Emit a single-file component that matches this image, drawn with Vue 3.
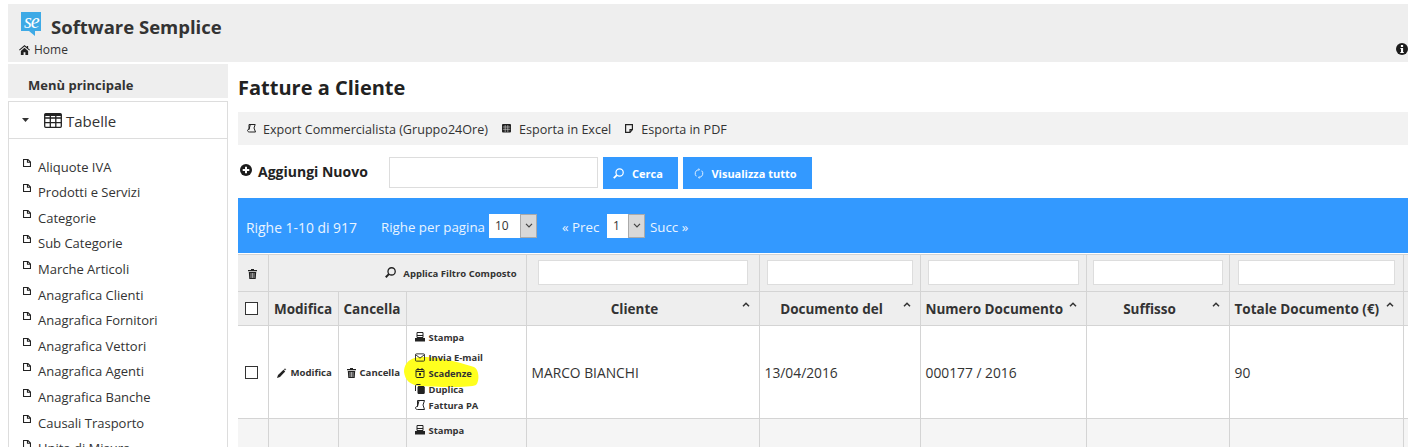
<script setup>
const menu = ['Aliquote IVA','Prodotti e Servizi','Categorie','Sub Categorie','Marche Articoli','Anagrafica Clienti','Anagrafica Fornitori','Anagrafica Vettori','Anagrafica Agenti','Anagrafica Banche','Causali Trasporto','Unita di Misura']
const widths = [30,70,68,120,233,161,166,143,174,120]
const sortCols = [
  { label: 'Cliente', cls: 'center' },
  { label: 'Documento del', cls: 'center' },
  { label: 'Numero Documento', cls: 'tight' },
  { label: 'Suffisso', cls: 'center' },
  { label: 'Totale Documento (€)', cls: 'tight' }
]
const filters = [
  { w: 210, pad: 11 },
  { w: 146, pad: 7 },
  { w: 151, pad: 7 },
  { w: 130, pad: 6 },
  { w: 157, pad: 8 }
]
const actions = [
  { label: 'Stampa', icon: 'print', cls: 'first' },
  { label: 'Invia E-mail', icon: 'mail' },
  { label: 'Scadenze', icon: 'cal' },
  { label: 'Duplica', icon: 'dup' },
  { label: 'Fattura PA', icon: 'scroll' }
]
</script>

<template>
  <div class="page">
    <header class="top">
      <div class="brand">
        <div class="logo"><span>se</span><i></i></div>
        <h1>Software Semplice</h1>
      </div>
      <div class="crumb">
        <div class="home">
          <svg width="11" height="10" viewBox="0 0 12 11"><path d="M6 0 0 5.2l.7.8L6 1.6 11.3 6l.7-.8-2-1.700V1H8.500v1.200zM2 6.500V11h3V8h2v3h3V6.500L6 3z" fill="#222"/></svg>
          <span>Home</span>
        </div>
        <svg class="info" width="12" height="12" viewBox="0 0 12 12"><circle cx="6" cy="6" r="6" fill="#1c1c1c"/><rect x="4.900" y="2" width="2.200" height="2" fill="#fff"/><path d="M4.400 5h2.700v4h.7v1H4.300V9H5V6h-.6z" fill="#fff"/></svg>
      </div>
    </header>

    <div class="body">
      <aside class="side">
        <div class="side-head">Menù principale</div>
        <div class="acc">
          <svg class="caret" width="7" height="4" viewBox="0 0 7 4"><path d="M0 0h7L3.500 4z" fill="#333"/></svg>
          <svg width="18" height="15" viewBox="0 0 18 15" fill="none" stroke="#222" stroke-width="1.300"><rect x=".7" y=".7" width="16.600" height="13.600" rx="1"/><path d="M.7 5h16.600M.7 9.700h16.600M6.300.7v13.600M11.800.7v13.600"/><path d="M.7 2h16.600" stroke-width="2"/></svg>
          <span>Tabelle</span>
        </div>
        <ul class="menu">
          <li v-for="m in menu" :key="m">
            <svg width="8" height="8" viewBox="0 0 9 9" fill="none" stroke="#222" stroke-width="1.200"><path d="M.6.600h5l2.800 2.800v5H.6zM5 .600v3h3.400"/></svg>
            <span>{{ m }}</span>
          </li>
        </ul>
      </aside>

      <main class="main">
        <h2>Fatture a Cliente</h2>
        <div class="tools">
          <span class="tool">
            <svg width="9" height="9" viewBox="0 0 9 9" fill="none" stroke="#222"><path d="M2 .5h6.200L7 4l1.500 4H2.500c-1.500 0-2-1-2-1.500 0-.7.400-1 1.500-1zM2 5.500 3.200 1"/></svg>
            <span>Export Commercialista (Gruppo24Ore)</span>
          </span>
          <span class="tool">
            <svg width="9" height="9" viewBox="0 0 9 9"><rect width="9" height="8.500" rx="1" fill="#222"/><path d="M.8 3h7.400M.8 5.300h7.400M3.200 1v7M5.800 1v7" stroke="#ddd" stroke-width=".6"/></svg>
            <span>Esporta in Excel</span>
          </span>
          <span class="tool">
            <svg width="8" height="9" viewBox="0 0 8 9" fill="none" stroke="#222" stroke-width="1.200"><path d="M.6.600h6.800v5L5 8.400H.6zM7.400 5.500H5v2.800"/></svg>
            <span>Esporta in PDF</span>
          </span>
        </div>
        <div class="search">
          <div class="add">
            <svg width="12" height="12" viewBox="0 0 12 12"><circle cx="6" cy="6" r="6" fill="#1c1c1c"/><path d="M6 2.700v6.600M2.700 6h6.600" stroke="#fff" stroke-width="2"/></svg>
            <span>Aggiungi Nuovo</span>
          </div>
          <input class="q" type="text" />
          <button class="btn cerca">
            <svg width="11" height="11" viewBox="0 0 10 10" fill="none" stroke="#fff" stroke-width="1.100"><circle cx="6" cy="4" r="3.300"/><path d="M3.500 6.500.7 9.300" stroke-width="1.600"/></svg>
            <span>Cerca</span>
          </button>
          <button class="btn vis">
            <svg width="10" height="11" viewBox="0 0 10 11" fill="none" stroke="#dfefff" stroke-width="1"><path d="M2.300 8.300A4 4 0 0 1 4.500 1.600M7.700 2.700a4 4 0 0 1-2.200 6.700"/><path d="M4.500 0v3.200L6 1.600zM5.500 11V7.800L4 9.400z" fill="#dfefff" stroke="none"/></svg>
            <span>Visualizza tutto</span>
          </button>
        </div>

        <div class="pager">
          <span class="t count">Righe 1-10 di 917</span>
          <span class="t rpp">Righe per pagina</span>
          <div class="sel s1"><span>10</span><b><svg width="8" height="5" viewBox="0 0 8 5" fill="none" stroke="#444" stroke-width="1.200"><path d="m1 .8 3 3 3-3"/></svg></b></div>
          <span class="t prev">« Prec</span>
          <div class="sel s2"><span>1</span><b><svg width="8" height="5" viewBox="0 0 8 5" fill="none" stroke="#444" stroke-width="1.200"><path d="m1 .8 3 3 3-3"/></svg></b></div>
          <span class="t">Succ »</span>
        </div>

        <table class="grid">
          <colgroup>
            <col v-for="(w, i) in widths" :key="i" :style="{ width: w + 'px' }" />
          </colgroup>
          <tbody>
            <tr class="r-filter">
              <td class="c">
                <svg width="9" height="10" viewBox="0 0 9 10"><path d="M3 0h3v1h3v1.200H0V1h3zM.8 3h7.400l-.5 7H1.300z" fill="#222"/><path d="M3 4v5M4.500 4v5M6 4v5" stroke="#eee" stroke-width=".6"/></svg>
              </td>
              <td colspan="3" class="apply">
                <svg width="11" height="11" viewBox="0 0 10 10" fill="none" stroke="#222" stroke-width="1.200"><circle cx="6" cy="4" r="3.300"/><path d="M3.500 6.500.7 9.300" stroke-width="1.800"/></svg>
                <span>Applica Filtro Composto</span>
              </td>
              <td v-for="f in filters" :key="f.pad + '-' + f.w" :style="{ paddingLeft: f.pad + 'px' }"><input class="f" type="text" :style="{ width: f.w + 'px' }" /></td>
              <td></td>
            </tr>
            <tr class="r-head">
              <td class="c"><span class="box"></span></td>
              <th>Modifica</th>
              <th>Cancella</th>
              <th></th>
              <th v-for="c in sortCols" :key="c.label" :class="c.cls">
                <div class="th">
                  <span>{{ c.label }}</span>
                  <svg width="8" height="5" viewBox="0 0 8 5" fill="none" stroke="#333" stroke-width="1.500"><path d="m1 4.300 3-3 3 3"/></svg>
                </div>
              </th>
              <th></th>
            </tr>
            <tr class="r-data">
              <td class="c"><span class="box"></span></td>
              <td class="act">
                <svg width="10" height="10" viewBox="0 0 10 10"><path d="M0 10 1 7 6.500 1.800l1.700 1.700L3 9z" fill="#222"/><path d="M8 0l.4 1 1 .4-1 .4L8 2.800l-.4-1-1-.4 1-.4z" fill="#222"/></svg>
                <span>Modifica</span>
              </td>
              <td class="act">
                <svg width="9" height="10" viewBox="0 0 9 10"><path d="M3 0h3v1h3v1.200H0V1h3zM.8 3h7.400l-.5 7H1.300z" fill="#222"/><path d="M3 4v5M4.500 4v5M6 4v5" stroke="#fff" stroke-width=".6"/></svg>
                <span>Cancella</span>
              </td>
              <td class="acts">
                <svg class="mark" width="76" height="32" viewBox="0 0 76 32"><path d="M8 3C14 0 24 1 32 2 44 3 60 8 70 11c5 2 6 14 2 18-6 3-42 2-56 1C6 29 1 24 0 16 0 10 3 5 8 3z" fill="#ffff1e"/></svg>
                <div v-for="a in actions" :key="a.label" class="a-row" :class="a.cls">
                  <svg v-if="a.icon === 'print'" width="10" height="10" viewBox="0 0 10 10" fill="none" stroke="#222"><path d="M2 .5h6v5H2z"/><path d="M0 6h10v3.500H0z" fill="#222" stroke="none"/><path d="M2 3.500h6" /></svg>
                  <svg v-else-if="a.icon === 'mail'" width="11" height="9" viewBox="0 0 11 9" fill="none" stroke="#222"><rect x=".5" y=".5" width="10" height="8" rx="1"/><path d="m.8 1.500 4.700 3.700 4.700-3.700"/></svg>
                  <svg v-else-if="a.icon === 'cal'" width="9" height="10" viewBox="0 0 9 10" fill="none" stroke="#222"><rect x=".5" y="1.500" width="8" height="8" rx="1"/><path d="M2.500 0v2.500M6.500 0v2.500M.5 3.500h8" /><rect x="3.500" y="5" width="2" height="2.500" fill="#222" stroke="none"/></svg>
                  <svg v-else-if="a.icon === 'dup'" width="10" height="10" viewBox="0 0 10 10"><path d="M.5 7V2C.5 1 1.200.5 2 .5h3.500" fill="none" stroke="#222"/><path d="M2.500 3.500c0-.8.500-1.500 1.500-1.500h4c1 0 1.800.7 1.800 1.500V8.500c0 1-.8 1.500-1.800 1.500H4c-1 0-1.500-.5-1.500-1.500z" fill="#222"/></svg>
                  <svg v-else width="10" height="10" viewBox="0 0 10 10" fill="none" stroke="#222"><path d="M2.500.5h7L8 5l1.500 4.500H2.500C1 9.500.5 8.500.5 8c0-.8.500-1.500 2-1.500zM2.500 6.500 4 .8"/></svg>
                  <span>{{ a.label }}</span>
                </div>
              </td>
              <td>MARCO BIANCHI</td>
              <td>13/04/2016</td>
              <td>000177 / 2016</td>
              <td></td>
              <td>90</td>
              <td></td>
            </tr>
            <tr class="r-alt">
              <td></td><td></td><td></td>
              <td class="acts">
                <div class="a-row first">
                  <svg width="10" height="10" viewBox="0 0 10 10" fill="none" stroke="#222"><path d="M2 .5h6v5H2z"/><path d="M0 6h10v3.500H0z" fill="#222" stroke="none"/><path d="M2 3.500h6" /></svg>
                  <span>Stampa</span>
                </div>
              </td>
              <td></td><td></td><td></td><td></td><td></td><td></td>
            </tr>
          </tbody>
        </table>
      </main>
    </div>
  </div>
</template>

<style>
html, body { margin: 0; background: #fff; overflow: hidden; }
</style>

<style scoped>
.page {
  width: 1408px; height: 447px; overflow: hidden; padding-top: 4px; box-sizing: border-box;
  font-family: "Open Sans", "Noto Sans", sans-serif; color: #333; font-size: 13px;
}
.top { margin-left: 8px; height: 58px; background: #eee; box-sizing: border-box; padding: 8px 0 0 13px; }
.brand { display: flex; align-items: flex-start; height: 27px; }
.logo { position: relative; width: 20px; height: 19px; background: #3eaae6; margin-right: 10px; flex: none; }
.logo span { display: block; color: #fff; font: italic 400 20px/19px "Liberation Serif", serif; letter-spacing: -1px; padding-left: 3px; }
.logo i { position: absolute; left: 8px; top: 19px; width: 0; height: 0; border-top: 5px solid #3eaae6; border-left: 6px solid transparent; }
h1 { margin: 1px 0 0; font-size: 18.500px; font-weight: 700; color: #333; line-height: 27px; }
.crumb { display: flex; justify-content: space-between; align-items: center; margin-top: 2px; height: 17px; margin-left: -2px; }
.home { display: flex; align-items: center; gap: 4px; font-size: 12px; color: #333; }
.info { margin-top: -2px; }
.body { display: flex; }
.side { width: 220px; margin: 2px 0 0 8px; flex: none; }
.side-head { height: 34px; background: #eee; font-weight: 700; font-size: 13px; line-height: 43px; padding-left: 20px; box-sizing: border-box; overflow: hidden; color: #333; }
.acc { margin-top: 3px; height: 38px; box-sizing: border-box; border: 1px solid #ddd; display: flex; align-items: center; padding-left: 13px; font-size: 15px; color: #333; }
.caret { margin-right: 15px; }
.acc span { margin-left: 4px; padding-top: 2px; }
.menu { list-style: none; margin: 0; padding: 15.700px 0 0 14px; border: 1px solid #ddd; border-width: 0 1px; height: 320px; box-sizing: border-box; }
.menu li { height: 25.600px; display: flex; align-items: flex-start; color: #333; font-size: 13px; line-height: 25px; }
.menu svg { margin: 4px 7px 0 0; flex: none; }
.main { margin-left: 10px; width: 1400px; flex: none; }
h2 { margin: 0; height: 50px; font-size: 20px; line-height: 52px; font-weight: 700; color: #222; }
.tools { width: 1170px; height: 33px; background: #f2f2f2; display: flex; align-items: center; padding-left: 9px; gap: 14px; font-size: 12.600px; color: #333; }
.tool { display: flex; align-items: center; gap: 7px; }
.tool span { padding-top: 1px; }
.tool + .tool { gap: 8px; }
.search { display: flex; align-items: flex-start; margin-top: 12px; height: 41px; }
.add { display: flex; align-items: center; gap: 6px; font-weight: 700; font-size: 14px; color: #222; padding-top: 5px; margin-left: 2px; flex: none; box-sizing: border-box; width: 149px; }
.add svg { margin-top: -3px; }
.q { width: 209px; height: 31px; box-sizing: border-box; border: 1px solid #ddd; background: #fff; margin: 0 5px 0 0; padding: 0; }
.btn { height: 32px; border: 0; background: #3399ff; color: #fff; font: 700 11px "Open Sans", sans-serif; margin: 0 5px 0 0; padding: 0 5px 0 0; display: flex; align-items: center; justify-content: center; gap: 8px; }
.cerca { width: 75px; }
.vis { width: 129px; gap: 7px; padding-right: 4px; }
.pager { width: 1170px; height: 55px; background: #3399ff; color: #e9f4ff; display: flex; align-items: center; padding-left: 8px; font-size: 13.300px; white-space: nowrap; }
.t { padding-top: 3px; }
.count { width: 135px; font-size: 13.900px; }
.rpp { width: 108px; }
.sel { width: 48px; height: 24px; background: #fff; display: flex; color: #333; box-sizing: border-box; font-size: 12px; align-items: center; padding-left: 6px; justify-content: space-between; flex: none; }
.s2 { width: 38px; margin-right: 5px; }
.sel b { width: 17px; height: 24px; background: #d8d8d8; border: 1px solid #aaa; box-sizing: border-box; display: flex; align-items: center; justify-content: center; }
.prev { margin-left: 25px; width: 45px; }
.grid { border-collapse: collapse; table-layout: fixed; width: 1265px; margin-top: 1px; font-size: 13.800px; }
.grid td, .grid th { border: 1px solid #d4d4d4; padding: 1px 5px 0; box-sizing: border-box; }
.grid tr > :first-child { border-left: 0; }
.r-filter { height: 37px; background: #eee; }
.c { text-align: center; padding: 0 !important; }
.r-filter td.apply { text-align: right; padding: 0 9px 0 0; font-size: 9.500px; font-weight: 700; color: #333; }
.apply span { margin-left: 7px; }
.apply svg { vertical-align: -1px; }
.f { display: block; height: 25px; box-sizing: border-box; border: 1px solid #ddd; background: #fff; padding: 0; margin: -3px 0 0; }
.r-head { height: 34px; background: #eee; }
.r-head th { font-size: 13.500px; font-weight: 700; color: #333; white-space: nowrap; }
.box { display: inline-block; width: 13px; height: 13px; border: 1px solid #333; box-sizing: border-box; background: #fff; vertical-align: middle; margin: -3px 2px 0 0; }
.th { display: flex; justify-content: center; align-items: center; position: relative; }
.center .th { padding-right: 16px; }
.th svg { position: absolute; right: 4px; top: 2px; }
.tight .th { justify-content: flex-start; }
.r-data { height: 93px; background: #fff; }
.act { font-size: 9.600px; font-weight: 700; white-space: nowrap; color: #333; padding: 0 0 0 8px !important; }
.act svg { margin-right: 4px; vertical-align: middle; }
.acts { position: relative; padding: 0 0 0 8px !important; vertical-align: top; font-size: 9.400px; font-weight: 700; color: #333; }
.mark { position: absolute; left: -3px; top: 30px; }
.a-row { position: relative; display: flex; align-items: center; gap: 4px; height: 16px; white-space: nowrap; }
.a-row svg { width: 10px; flex: none; }
.first { height: 16px; margin: 3px 0 4px; }
.r-alt { background: #f5f5f5; height: 40px; }
.r-alt td { vertical-align: top; }
</style>
